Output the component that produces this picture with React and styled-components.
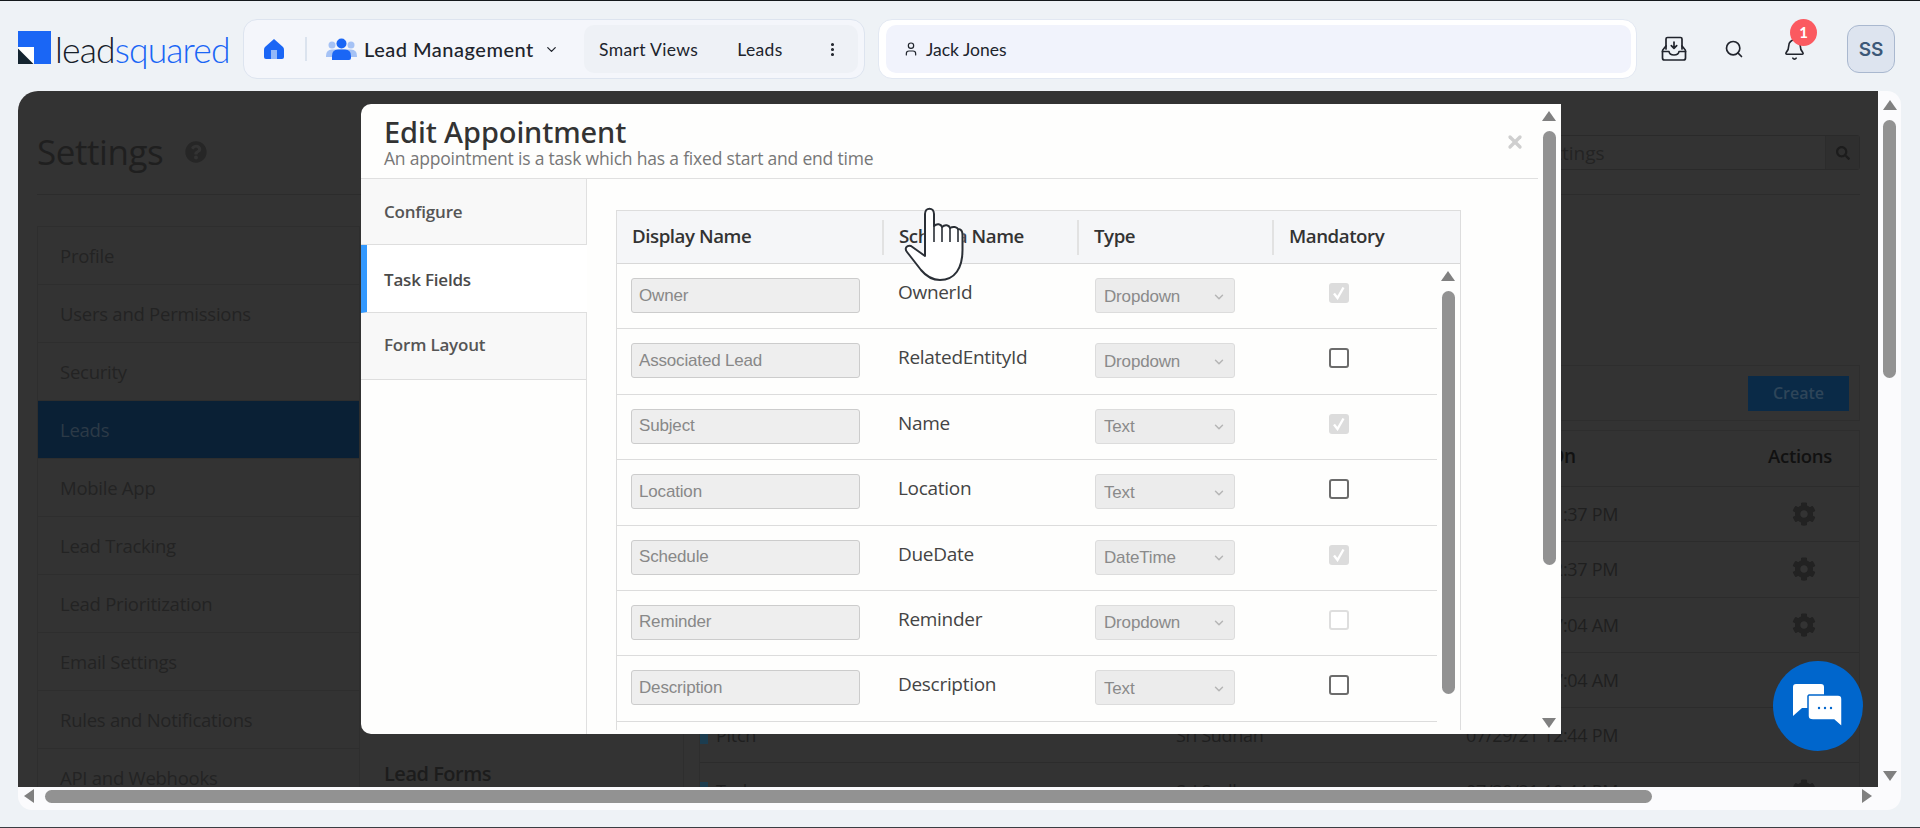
import React from 'react';
import styled, { createGlobalStyle } from 'styled-components';
import { ChevronDown, EllipsisVertical, Search, Bell, User, X } from 'lucide-react';
import { FaCog, FaQuestionCircle, FaSearch } from 'react-icons/fa';

const GlobalStyle = createGlobalStyle`
  html, body { margin: 0; padding: 0; background: #eef2f6; }
  * { box-sizing: border-box; }
`;

const NAV_ITEMS = ['Profile', 'Users and Permissions', 'Security', 'Leads', 'Mobile App', 'Lead Tracking', 'Lead Prioritization', 'Email Settings', 'Rules and Notifications', 'API and Webhooks'];

const BG_ROWS = [
  { name: 'Appointment', owner: 'Sri Sudhan', date: '07/29/21 11:37 PM' },
  { name: 'Call', owner: 'Sri Sudhan', date: '07/29/21 12:37 PM' },
  { name: 'Demo', owner: 'Sri Sudhan', date: '07/29/21 07:04 AM' },
  { name: 'Meeting', owner: 'Sri Sudhan', date: '07/29/21 07:04 AM' },
  { name: 'Pitch', owner: 'Sri Sudhan', date: '07/29/21 12:44 PM' },
  { name: 'Todo', owner: 'Sri Sudhan', date: '07/30/21 10:44 PM' },
];

const FIELDS = [
  { label: 'Owner', schema: 'OwnerId', type: 'Dropdown', check: 'locked' },
  { label: 'Associated Lead', schema: 'RelatedEntityId', type: 'Dropdown', check: 'open' },
  { label: 'Subject', schema: 'Name', type: 'Text', check: 'locked' },
  { label: 'Location', schema: 'Location', type: 'Text', check: 'open' },
  { label: 'Schedule', schema: 'DueDate', type: 'DateTime', check: 'locked' },
  { label: 'Reminder', schema: 'Reminder', type: 'Dropdown', check: 'faded' },
  { label: 'Description', schema: 'Description', type: 'Text', check: 'open' },
];

const Page = styled.div`
  width: 1920px;
  height: 828px;
  background: #eef2f6;
  border-top: 1px solid #14181c;
  border-bottom: 1px solid #3a3d42;
  overflow: hidden;
  position: relative;
`;

const Header = styled.header`
  height: 90px;
  display: flex;
  align-items: center;
  padding: 6px 25px 0 18px;
  font-family: "Lato", "Noto Sans", sans-serif;
  color: #20242c;
  & > * { flex: none; }
`;

const Logo = styled.div`
  width: 225px;
  display: flex;
  align-items: center;
  gap: 4px;
  margin-top: -3px;
`;

const LogoText = styled.span`
  font-family: "Lato", sans-serif;
  font-weight: 300;
  font-size: 35.5px;
  letter-spacing: -0.85px;
  line-height: 32px;
  color: #16202a;
  margin-top: 4px;
  b { font-weight: 300; color: #1a66f5; }
`;

const NavPill = styled.nav`
  width: 622px;
  height: 60px;
  border: 1px solid #dde4ef;
  border-radius: 14px;
  background: #f4f6fb;
  display: flex;
  align-items: center;
  padding: 0 5px 0 20px;
`;

const Divider = styled.span`
  width: 2px;
  height: 24px;
  background: #dbe3ee;
  margin: 0 19px 0 21px;
`;

const ModuleName = styled.span`
  font-size: 20px;
  font-weight: 500;
  letter-spacing: 0.5px;
  margin-left: 7px;
  width: 180px;
  white-space: nowrap;
`;

const SubNav = styled.div`
  margin-left: 25px;
  width: 274px;
  height: 48px;
  border-radius: 10px;
  background: #eef1f6;
  display: flex;
  align-items: center;
  padding: 0 15px;
  font-size: 17.5px;
  letter-spacing: 0.35px;
  gap: 39px;
  white-space: nowrap;
  svg { margin-left: 2px; }
`;

const SearchShell = styled.div`
  margin-left: 13px;
  width: 759px;
  height: 60px;
  background: #fff;
  border: 1px solid #e2e8f2;
  border-radius: 14px;
  padding: 5px 5px 5px 7px;
`;

const SearchInner = styled.div`
  height: 48px;
  background: #f1f3fc;
  border-radius: 10px;
  display: flex;
  align-items: center;
  gap: 7px;
  padding-left: 17px;
  font-size: 17.5px;
`;

const Tools = styled.div`
  display: flex;
  align-items: center;
  margin-left: 7px;
`;

const ToolButton = styled.span`
  width: 60px;
  display: flex;
  justify-content: center;
  position: relative;
`;

const Badge = styled.span`
  position: absolute;
  top: -19px;
  left: 26px;
  width: 27px;
  height: 27px;
  border-radius: 50%;
  background: #fb5a60;
  color: #fff;
  font-weight: 700;
  font-size: 15px;
  display: flex;
  align-items: center;
  justify-content: center;
`;

const Avatar = styled.span`
  width: 48px;
  height: 48px;
  margin-left: 23px;
  border-radius: 12px;
  border: 1px solid #a9b8cf;
  background: #dde4ef;
  color: #3c5878;
  font-weight: 600;
  font-size: 19px;
  font-family: "Inter", sans-serif;
  display: flex;
  align-items: center;
  justify-content: center;
`;

const Frame = styled.div`
  margin-left: 18px;
  width: 1883px;
  height: 719px;
  display: grid;
  grid-template-columns: 1860px 23px;
  grid-template-rows: 696px 23px;
  background: #fbfbfd;
  border-radius: 20px 14px 14px 14px;
`;

const Viewport = styled.main`
  position: relative;
  background: #333333;
  border-radius: 20px 0 0 0;
  overflow: hidden;
  padding: 0 18px 0 19px;
  font-family: "Open Sans", "Noto Sans", sans-serif;
  color: #222;
`;

const SettingsHead = styled.div`
  height: 104px;
  border-bottom: 1px solid #2c2c2c;
  display: flex;
  align-items: center;
  justify-content: space-between;
  padding-top: 16px;
`;

const SettingsTitle = styled.h1`
  margin: 2px 0 0;
  font-weight: 400;
  font-size: 35px;
  color: #1f1f1f;
  display: flex;
  align-items: center;
  gap: 22px;
  letter-spacing: -0.45px;
`;

const SettingsSearch = styled.div`
  width: 400px;
  height: 35px;
  border: 1px solid #2a2a2a;
  border-radius: 3px;
  display: flex;
  align-items: center;
  justify-content: space-between;
  font-size: 19px;
  color: #232323;
  padding-left: 8px;
  margin-top: 4px;
`;

const SearchAddon = styled.span`
  width: 34px;
  height: 33px;
  background: #2f2f2f;
  border-left: 1px solid #2c2c2c;
  display: flex;
  align-items: center;
  justify-content: center;
`;

const SettingsBody = styled.div`
  display: grid;
  grid-template-columns: 323px 324px 1fr;
  margin-top: 31px;
`;

const SideNav = styled.ul`
  list-style: none;
  margin: 0;
  padding: 0;
  border: 1px solid #2e2e2e;
`;

const SideItem = styled.li`
  height: 58px;
  display: flex;
  align-items: center;
  padding-left: 22px;
  font-size: 18.5px;
  letter-spacing: -0.25px;
  border-bottom: 1px solid #2e2e2e;
  background: ${p => (p.$active ? '#0a2035' : 'transparent')};
  color: ${p => (p.$active ? '#2c3a47' : '#232323')};
`;

const MiddleCol = styled.section`
  border-right: 1px solid #2e2e2e;
  padding: 534px 0 0 24px;
  font-size: 20px;
  font-weight: 600;
  letter-spacing: -0.5px;
  color: #1c1c1c;
`;

const RightCol = styled.section`
  padding: 139px 0 0 15px;
`;

const CreateBar = styled.div`
  height: 56px;
  border: 1px solid #2e2e2e;
  display: flex;
  justify-content: flex-end;
  align-items: center;
  padding-right: 10px;
`;

const CreateButton = styled.span`
  width: 101px;
  height: 35px;
  background: #0a2a47;
  color: #2e4559;
  font-weight: 600;
  font-size: 16px;
  display: flex;
  align-items: center;
  justify-content: center;
`;

const BgTable = styled.div`
  margin-top: 9px;
  border: 1px solid #2e2e2e;
`;

const BgRow = styled.div`
  height: ${p => (p.$head ? '56px' : '55.3px')};
  display: grid;
  grid-template-columns: 476px 290px 285px 1fr;
  align-items: center;
  border-bottom: 1px solid #2c2c2c;
  font-size: ${p => (p.$head ? '19px' : '18px')};
  letter-spacing: -0.3px;
  color: ${p => (p.$head ? '#111' : '#1f1f1f')};
  font-weight: ${p => (p.$head ? 600 : 400)};
  padding-bottom: ${p => (p.$head ? '6px' : '0')};
`;

const BgName = styled.span`
  display: flex;
  align-items: center;
  gap: 8px;
  &::before {
    content: '';
    width: 8px;
    height: 17px;
    background: #1c3d50;
  }
`;

const BgAction = styled.span`
  display: flex;
  justify-content: center;
  padding-right: ${p => (p.$head ? '10px' : '3px')};
  font-size: ${p => (p.$head ? '18.5px' : '24px')};
  color: ${p => (p.$head ? '#111' : '#222')};
`;

const Modal = styled.div`
  position: absolute;
  left: 343px;
  top: 13px;
  width: 1200px;
  height: 630px;
  background: #fefefd;
  border-radius: 10px 0 0 10px;
  display: flex;
  overflow: hidden;
  font-family: "Open Sans", "Noto Sans", sans-serif;
`;

const ModalMain = styled.div`
  width: 1177px;
  display: flex;
  flex-direction: column;
`;

const ModalHeader = styled.div`
  height: 75px;
  flex: none;
  border-bottom: 1px solid #e0e0e0;
  padding: 11px 23px;
  position: relative;
`;

const ModalTitle = styled.h2`
  margin: 0;
  font-size: 29px;
  line-height: 33px;
  font-weight: 500;
  color: #333;
  font-family: "Noto Sans", sans-serif;
  letter-spacing: -0.1px;
`;

const ModalSub = styled.p`
  margin: -1px 0 0;
  font-size: 17.5px;
  line-height: 22px;
  color: #777;
  letter-spacing: -0.2px;
`;

const CloseIcon = styled.span`
  position: absolute;
  right: 13px;
  top: 28px;
  color: #cfcfcf;
  display: flex;
`;

const ModalBody = styled.div`
  flex: 1;
  display: flex;
  min-height: 0;
`;

const Tabs = styled.div`
  width: 226px;
  flex: none;
  border-right: 1px solid #e0e0e0;
`;

const Tab = styled.div`
  height: ${p => p.$h}px;
  display: flex;
  align-items: center;
  padding-left: ${p => (p.$active ? '17px' : '23px')};
  padding-top: ${p => (p.$active ? '2px' : '0')};
  padding-bottom: ${p => (p.$low ? '3px' : '0')};
  font-size: 17px;
  font-weight: 600;
  letter-spacing: -0.2px;
  color: ${p => (p.$active ? '#4a4a4a' : '#555')};
  background: ${p => (p.$active ? '#fff' : '#f8f8f8')};
  border-left: ${p => (p.$active ? '6px solid #3399ff' : 'none')};
  border-bottom: 1px solid #dedede;
  margin-right: ${p => (p.$active ? '-1px' : '0')};
  position: relative;
`;

const TableWrap = styled.div`
  padding: 31px 0 0 29px;
`;

const FieldTable = styled.div`
  width: 845px;
  height: 520px;
  border: 1px solid #dddddd;
  border-bottom: none;
  display: flex;
  flex-direction: column;
`;

const TableHead = styled.div`
  height: 53px;
  flex: none;
  display: grid;
  grid-template-columns: 267px 195px 195px 1fr;
  align-items: center;
  background: #f5f6f8;
  border-bottom: 1px solid #d8d8d8;
`;

const HeadCell = styled.div`
  height: 35px;
  display: flex;
  align-items: center;
  padding: 0 0 4px 15px;
  font-size: 18.7px;
  font-weight: 600;
  letter-spacing: -0.45px;
  color: #333;
  border-right: ${p => (p.$last ? 'none' : '2px solid #e2e2e2')};
`;

const TableScroller = styled.div`
  flex: 1;
  display: flex;
  min-height: 0;
`;

const Rows = styled.div`
  width: 820px;
`;

const Row = styled.div`
  height: 65.4px;
  display: grid;
  grid-template-columns: 267px 197px 196px 1fr;
  padding: 14px 0 0 14px;
  border-bottom: 1px solid #dcdcdc;
`;

const FakeInput = styled.div`
  width: 229px;
  height: 35px;
  background: #eeeeee;
  border: 1px solid #cccccc;
  border-radius: 3px;
  display: flex;
  align-items: center;
  padding-left: 7px;
  font-family: "Liberation Sans", sans-serif;
  font-size: 17px;
  color: #888;
  letter-spacing: -0.17px;
`;

const SchemaName = styled.div`
  font-size: 19px;
  line-height: 30px;
  margin-top: -1px;
  color: #444;
  letter-spacing: -0.3px;
`;

const FakeSelect = styled(FakeInput)`
  width: 140px;
  justify-content: space-between;
  padding: 2px 8px 0 8px;
  color: #8a8a8a;
  background: #ececec;
  border-color: #dcdcdc;
  svg { color: #b5b5b5; }
`;

const CheckCell = styled.div`
  display: flex;
  padding: 5px 0 0 38px;
`;

const CheckBox = styled.span`
  width: 20px;
  height: 20px;
  border-radius: 3px;
  display: flex;
  align-items: center;
  justify-content: center;
  background: ${p => (p.$kind === 'locked' ? '#dcdcdc' : '#fff')};
  border: ${p => (p.$kind === 'open' ? '2px solid #6c6c6c' : p.$kind === 'faded' ? '2px solid #dedede' : 'none')};
`;

const VTrack = styled.div`
  flex: 1;
  display: flex;
  flex-direction: column;
  align-items: center;
  padding-top: ${p => p.$top}px;
  padding-bottom: ${p => p.$bottom}px;
  padding-right: ${p => p.$shift || 0}px;
`;

const HTrack = styled.div`
  display: flex;
  align-items: center;
  padding: 0 6px 5px 6px;
`;

const ArrowUp = styled.span`
  flex: none;
  width: 0;
  height: 0;
  border-left: 7px solid transparent;
  border-right: 7px solid transparent;
  border-bottom: 10px solid #808080;
`;

const ArrowDown = styled.span`
  flex: none;
  width: 0;
  height: 0;
  margin-top: auto;
  border-left: 7px solid transparent;
  border-right: 7px solid transparent;
  border-top: 10px solid #808080;
`;

const ArrowLeft = styled.span`
  flex: none;
  width: 0;
  height: 0;
  border-top: 7px solid transparent;
  border-bottom: 7px solid transparent;
  border-right: 10px solid #808080;
`;

const ArrowRight = styled.span`
  flex: none;
  width: 0;
  height: 0;
  margin-left: auto;
  border-top: 7px solid transparent;
  border-bottom: 7px solid transparent;
  border-left: 10px solid #808080;
`;

const VThumb = styled.span`
  flex: none;
  width: 13px;
  height: ${p => p.$h}px;
  margin-top: 10px;
  border-radius: 7px;
  background: #929292;
`;

const HThumb = styled.span`
  flex: none;
  width: ${p => p.$w}px;
  height: 13px;
  margin-left: 11px;
  border-radius: 7px;
  background: #929292;
`;

const Corner = styled.div`
  background: transparent;
`;

const ChatBubble = styled.div`
  position: absolute;
  left: 1755px;
  top: 570px;
  width: 90px;
  height: 90px;
  border-radius: 50%;
  background: #0066cc;
  display: flex;
  align-items: center;
  justify-content: center;
`;

const HandCursor = styled.svg`
  position: absolute;
  left: 872px;
  top: 109px;
  filter: drop-shadow(0 0 1px rgba(255, 255, 255, 0.8));
`;

const LogoMark = () => (
  <svg width="33" height="33" viewBox="0 0 33 33">
    <rect width="33" height="33" fill="#1a66f5" />
    <rect x="0" y="16" width="16" height="17" fill="#ffffff" />
    <path d="M0 17.5 L15.5 33 L0 33 Z" fill="#14242f" />
  </svg>
);

const HomeIcon = () => (
  <svg width="20" height="22" viewBox="0 0 20 22">
    <path d="M10 1 L19 9 Q20 10 20 12 L20 19 Q20 21 18 21 L2 21 Q0 21 0 19 L0 12 Q0 10 1 9 Z" fill="#1a66f5" />
    <rect x="7" y="12" width="6" height="9" fill="#93b8f8" />
  </svg>
);

const PeopleIcon = () => (
  <svg width="31" height="22" viewBox="0 0 31 22">
    <circle cx="6" cy="7" r="3.5" fill="#a5c2f5" />
    <circle cx="25" cy="7" r="3.5" fill="#a5c2f5" />
    <path d="M0 18 Q0 11.5 6 11.5 L25 11.5 Q31 11.5 31 18 L31 19 L0 19 Z" fill="#a5c2f5" />
    <circle cx="15.5" cy="5.5" r="5" fill="#1a66f5" />
    <path d="M6 22 L6 18 Q6 11.5 12 11.5 L19 11.5 Q25 11.5 25 18 L25 20 Q25 22 23 22 Z" fill="#1a66f5" />
  </svg>
);

const DownloadTray = () => (
  <svg width="26" height="26" viewBox="0 0 26 26" fill="none" stroke="#20242c" strokeWidth="1.7" strokeLinecap="round" strokeLinejoin="round">
    <path d="M5 13 L5 3 Q5 1.5 6.5 1.5 L19.5 1.5 Q21 1.5 21 3 L21 13" />
    <path d="M13 6 L13 12 M10.3 9.6 L13 12.4 L15.7 9.6" />
    <path d="M5 10 L2.5 13 Q1.5 14 1.5 15 L1.5 22 Q1.5 24 3.5 24 L22.5 24 Q24.5 24 24.5 22 L24.5 15 Q24.5 14 23.5 13 L21 10" />
    <path d="M1.5 15.5 L8 15.5 Q8.5 19 13 19 Q17.5 19 18 15.5 L24.5 15.5" />
  </svg>
);

const ChatIcon = () => (
  <svg width="50" height="44" viewBox="0 0 50 44">
    <path d="M3 0 L28 0 Q31 0 31 3 L31 20 Q31 24 27 24 L9 24 L0 32 L0 3 Q0 0 3 0 Z" fill="#fff" />
    <path d="M16 11 L45 11 Q49 11 49 15 L49 43 L41 36 L20 36 Q15 36 15 32 L15 12 Z" fill="#fff" stroke="#0066cc" strokeWidth="1.5" />
    <circle cx="26" cy="24" r="1.2" fill="#0066cc" />
    <circle cx="32" cy="24" r="1.2" fill="#0066cc" />
    <circle cx="38" cy="24" r="1.2" fill="#0066cc" />
  </svg>
);

const Check = () => (
  <svg width="14" height="14" viewBox="0 0 14 14" fill="none" stroke="#fff" strokeWidth="2.4">
    <path d="M2 7.5 L5.5 12 L11.5 1.5" />
  </svg>
);

const App = () => (
  <Page>
    <GlobalStyle />
    <Header>
      <Logo>
        <LogoMark />
        <LogoText>lead<b>squared</b></LogoText>
      </Logo>
      <NavPill>
        <HomeIcon />
        <Divider />
        <PeopleIcon />
        <ModuleName>Lead Management</ModuleName>
        <ChevronDown size={15} strokeWidth={2} />
        <SubNav>
          <span>Smart Views</span>
          <span>Leads</span>
          <EllipsisVertical size={17} strokeWidth={2.4} />
        </SubNav>
      </NavPill>
      <SearchShell>
        <SearchInner>
          <User size={16} strokeWidth={1.8} />
          Jack Jones
        </SearchInner>
      </SearchShell>
      <Tools>
        <ToolButton><DownloadTray /></ToolButton>
        <ToolButton><Search size={20} strokeWidth={2} /></ToolButton>
        <ToolButton>
          <Bell size={23} strokeWidth={1.7} />
          <Badge>1</Badge>
        </ToolButton>
        <Avatar>SS</Avatar>
      </Tools>
    </Header>
    <Frame>
      <Viewport>
        <SettingsHead>
          <SettingsTitle>Settings <FaQuestionCircle size={22} color="#262626" /></SettingsTitle>
          <SettingsSearch>
            Search Settings
            <SearchAddon><FaSearch size={14} color="#1c1c1c" /></SearchAddon>
          </SettingsSearch>
        </SettingsHead>
        <SettingsBody>
          <SideNav>
            {NAV_ITEMS.map(item => (
              <SideItem key={item} $active={item === 'Leads'}>{item}</SideItem>
            ))}
          </SideNav>
          <MiddleCol>Lead Forms</MiddleCol>
          <RightCol>
            <CreateBar><CreateButton>Create</CreateButton></CreateBar>
            <BgTable>
              <BgRow $head>
                <span>Name</span>
                <span>Created By</span>
                <span>Modified On</span>
                <BgAction $head>Actions</BgAction>
              </BgRow>
              {BG_ROWS.map(row => (
                <BgRow key={row.name + row.date}>
                  <BgName>{row.name}</BgName>
                  <span>{row.owner}</span>
                  <span>{row.date}</span>
                  <BgAction><FaCog /></BgAction>
                </BgRow>
              ))}
            </BgTable>
          </RightCol>
        </SettingsBody>

        <Modal>
          <ModalMain>
            <ModalHeader>
              <ModalTitle>Edit Appointment</ModalTitle>
              <ModalSub>An appointment is a task which has a fixed start and end time</ModalSub>
              <CloseIcon><X size={20} strokeWidth={4} /></CloseIcon>
            </ModalHeader>
            <ModalBody>
              <Tabs>
                <Tab $h={66}>Configure</Tab>
                <Tab $h={68} $active>Task Fields</Tab>
                <Tab $h={67} $low>Form Layout</Tab>
              </Tabs>
              <TableWrap>
                <FieldTable>
                  <TableHead>
                    <HeadCell>Display Name</HeadCell>
                    <HeadCell>Schema Name</HeadCell>
                    <HeadCell>Type</HeadCell>
                    <HeadCell $last>Mandatory</HeadCell>
                  </TableHead>
                  <TableScroller>
                    <Rows>
                      {FIELDS.map(field => (
                        <Row key={field.schema}>
                          <FakeInput>{field.label}</FakeInput>
                          <SchemaName>{field.schema}</SchemaName>
                          <FakeSelect>{field.type}<ChevronDown size={14} strokeWidth={2.5} /></FakeSelect>
                          <CheckCell>
                            <CheckBox $kind={field.check}>{field.check === 'locked' && <Check />}</CheckBox>
                          </CheckCell>
                        </Row>
                      ))}
                    </Rows>
                    <VTrack $top={7} $bottom={6} $shift={1}>
                      <ArrowUp />
                      <VThumb $h={403} />
                    </VTrack>
                  </TableScroller>
                </FieldTable>
              </TableWrap>
            </ModalBody>
          </ModalMain>
          <VTrack $top={7} $bottom={6} $shift={1}>
            <ArrowUp />
            <VThumb $h={434} />
            <ArrowDown />
          </VTrack>
        </Modal>

        <HandCursor width="90" height="85" viewBox="0 0 90 85" fill="#fff" stroke="#2a2f36" strokeWidth="2" strokeLinejoin="round">
          <path d="M35 50 L35 14 C35 7 44 7 44 14 L44 26 C47 23 51 24 52 27 C55 24 59 25 60 28 C63 26 67 27 68 29 C71 29 72.5 31 72.5 35 L72.5 50 C72.5 68 65 80 50 80 C42 80 36 76 31 70 L17 52 C14 48 17 45 21 46 L35 56 Z" />
          <path d="M44 26 L44 42 M52 27 L52 42 M60 28 L60 42 M68 29 L68 42" fill="none" strokeWidth="1.6" />
        </HandCursor>

        <ChatBubble><ChatIcon /></ChatBubble>
      </Viewport>
      <VTrack $top={9} $bottom={6}>
        <ArrowUp />
        <VThumb $h={258} />
        <ArrowDown />
      </VTrack>
      <HTrack>
        <ArrowLeft />
        <HThumb $w={1607} />
        <ArrowRight />
      </HTrack>
      <Corner />
    </Frame>
  </Page>
);

export default App;
